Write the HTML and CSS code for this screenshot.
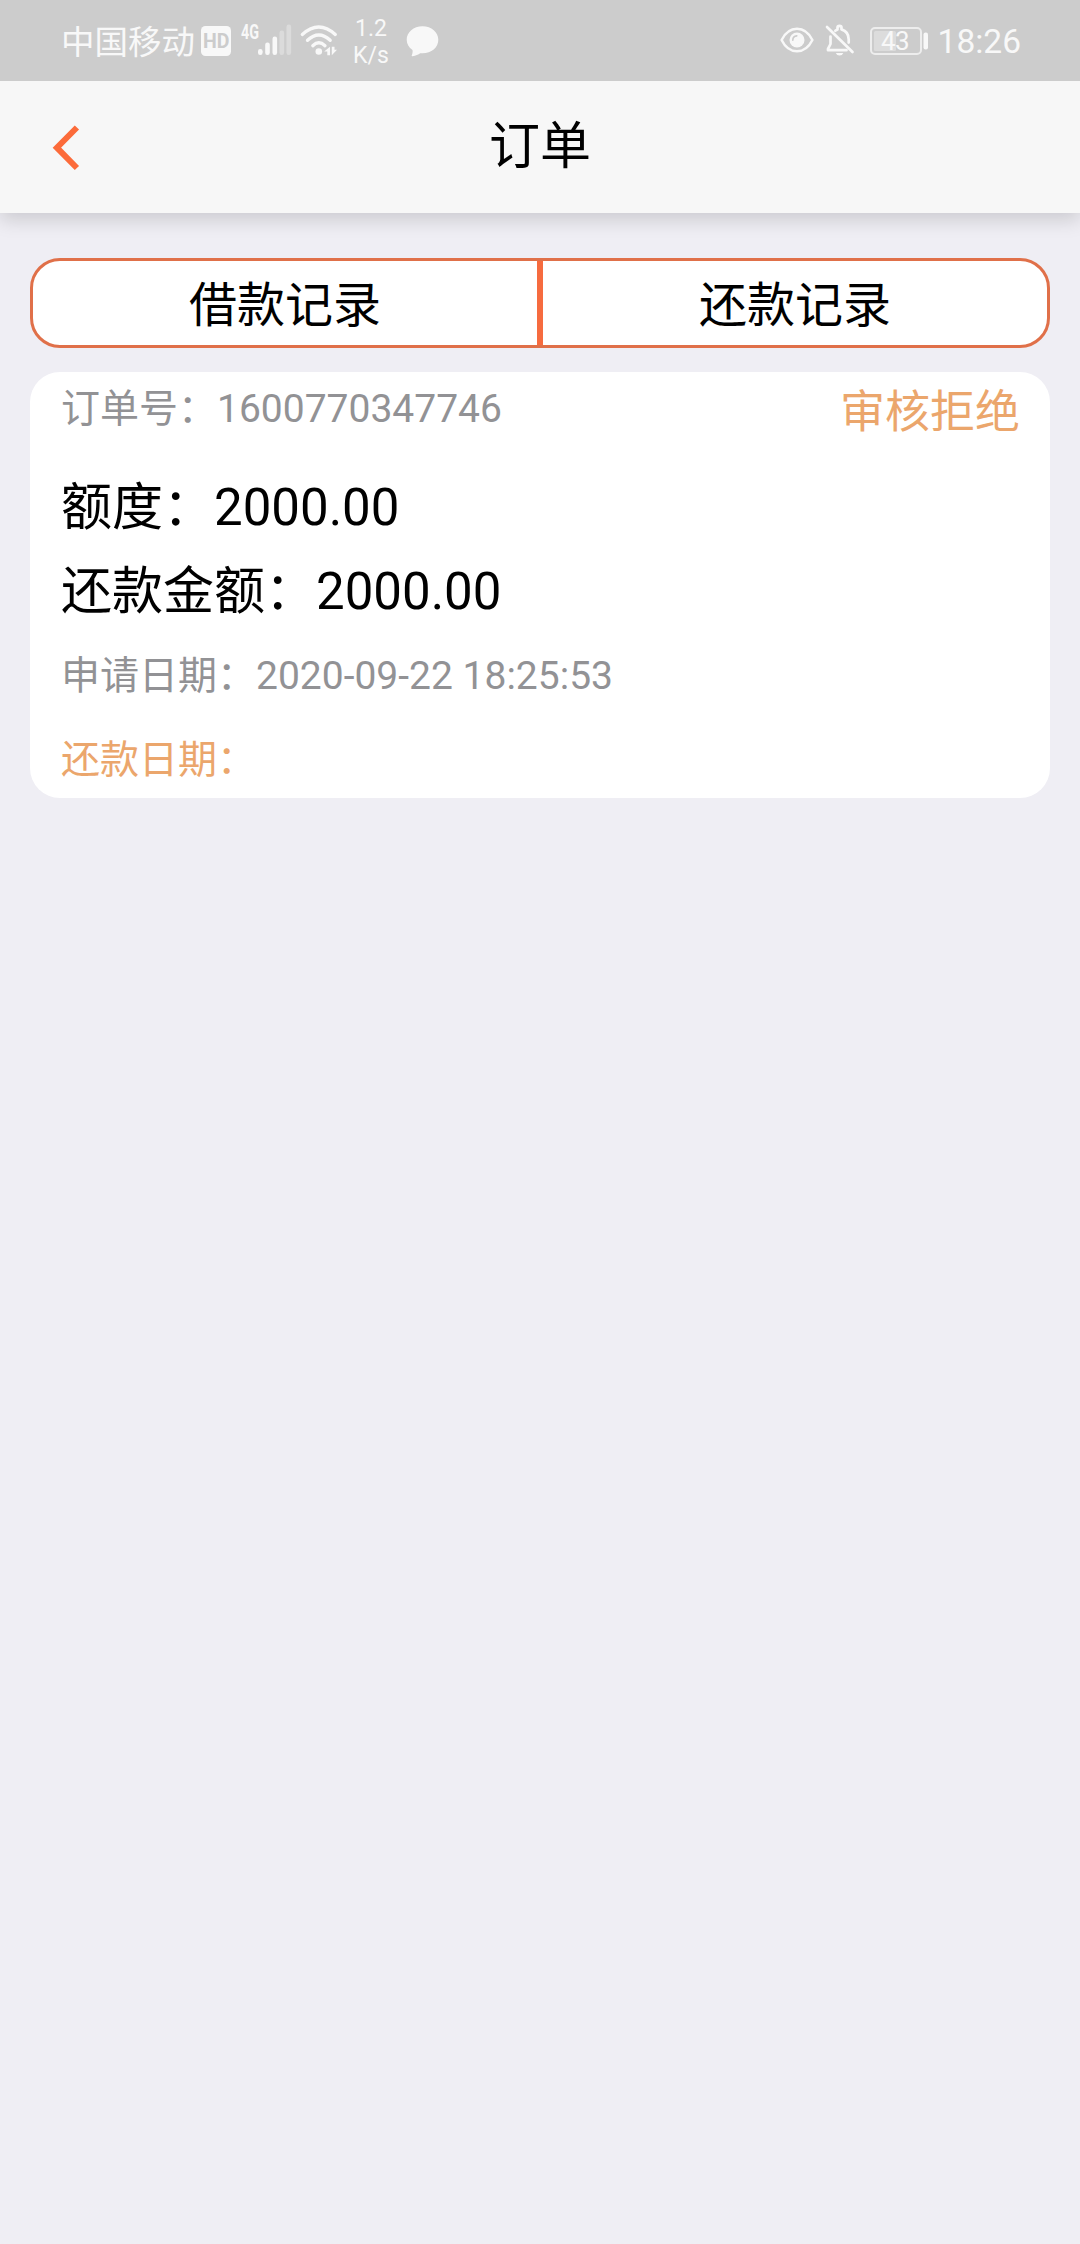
FILE: index.html
```html
<!DOCTYPE html>
<html lang="zh-CN">
<head>
<meta charset="utf-8">
<title>订单</title>
<link rel="stylesheet" href="styles.css">
</head>
<body>
<div class="statusbar">
  <div class="status-left">
    <span class="carrier">中国移动</span>
    <svg class="hd" width="30" height="30" viewBox="0 0 30 30"><rect width="30" height="30" rx="4.500" fill="#f8f8f8"/><text x="2" y="22" class="hd-text" textLength="26.500" lengthAdjust="spacingAndGlyphs">HD</text></svg>
    <svg class="signal" width="51" height="40" viewBox="0 -6 51 40">
      <text x="0" y="17" class="net-text" textLength="18" lengthAdjust="spacingAndGlyphs">4G</text>
      <g fill="#f8f8f8"><rect x="17" y="27" width="4.600" height="6" rx="2.200"/><rect x="24.200" y="20.500" width="4.600" height="12.500" rx="2.200"/><rect x="31.500" y="14.500" width="4.600" height="18.500" rx="2.200"/></g>
      <g fill="#dbdbdb"><rect x="38.500" y="8.500" width="4.600" height="24.500" rx="2.200"/><rect x="45.500" y="2.500" width="4.600" height="30.500" rx="2.200"/></g>
    </svg>
    <svg class="wifi" width="38" height="32" viewBox="0 0 38 32">
      <g fill="none" stroke="#f8f8f8" stroke-width="3.300" stroke-linecap="round"><path d="M2.300 9.500Q18.800-5.500 35.300 9.500"/><path d="M7.500 15.300Q18.800 4.700 30.200 15.300"/><path d="M12.800 20.700Q18.800 15 25 20.700"/></g>
      <circle cx="18.800" cy="26.500" r="3.300" fill="#f8f8f8"/>
      <path fill="#f8f8f8" d="M30 21.800v8.400h-2.700v-3.700h-3.100zM31.800 21.800v8.400l5.200-5.500h-2.500v-2.900z"/>
    </svg>
    <div class="speed"><span>1.2</span><span>K/s</span></div>
    <svg class="bubble" width="33" height="31" viewBox="0 0 33 31"><path fill="#f8f8f8" d="M16.500.3C7.500.3.700 6.200.700 13.800c0 4.200 2.200 7.800 5.800 10.300.4 2.200-.2 4-.8 5.400-.2.600.2 1 .9.800 3.300-.8 5.700-1.800 7.600-3.100 10.200 1 18.100-5 18.100-13.400C32.300 6.200 25.500.3 16.500.3z"/></svg>
  </div>
  <div class="status-right">
    <svg class="eye" width="34" height="26" viewBox="0 0 34 26"><path d="M1.600 13C9-2 25-2 32.400 13 25 28 9 28 1.600 13z" fill="none" stroke="#f8f8f8" stroke-width="2.500" stroke-linejoin="round"/><circle cx="17" cy="13" r="7.500" fill="#f8f8f8"/><path d="M12.800 13.200q0-4 4-4.300" fill="none" stroke="#ccc" stroke-width="1.600" stroke-linecap="round"/></svg>
    <svg class="bell" width="30" height="32" viewBox="0 0 30 32">
      <g fill="none" stroke="#f8f8f8" stroke-width="2.700" stroke-linecap="round" stroke-linejoin="round"><path d="M2 3 27.500 28"/><path d="M5.500 12.500v7.500L3 24.800v1.400h18.500"/><path d="M10.300 6.700q1-.8 2.200-1.300V3.700q0-1.800 2-1.800t2 1.800v1.700q7.200 2.300 7.200 10v3.200"/></g>
      <path d="M10.800 29h7.500q-1 2.500-3.750 2.500T10.800 29z" fill="#f8f8f8"/>
    </svg>
    <svg class="battery" width="59" height="28" viewBox="0 0 59 28"><rect x="1" y="1" width="50" height="26" rx="4" fill="none" stroke="#ededed" stroke-width="2"/><rect x="4" y="4" width="22" height="20" rx="1.500" fill="#dcdcdc"/><rect x="53.500" y="5.500" width="4.500" height="17" rx="2" fill="#f8f8f8"/><text x="11" y="22.500" class="battery-text" textLength="28.500">43</text></svg>
    <span class="clock">18:26</span>
  </div>
</div>
<header class="header">
  <svg class="back" width="28" height="46" viewBox="0 0 28 46"><path d="M24.900 2.500 4.900 22.700 24.900 43" fill="none" stroke="#fc6b3a" stroke-width="6"/></svg>
  <h1 class="title">订单</h1>
</header>
<main class="content">
  <nav class="tabs">
    <a class="tab">借款记录</a>
    <a class="tab">还款记录</a>
  </nav>
  <section class="card">
    <div class="row row-head"><span>订单号：1600770347746</span><span class="state">审核拒绝</span></div>
    <div class="row amount">额度：2000.00</div>
    <div class="row amount">还款金额：2000.00</div>
    <div class="row">申请日期：2020-09-22 18:25:53</div>
    <div class="row due">还款日期：</div>
  </section>
</main>
</body>
</html>
```
FILE: styles.css
```css
* { box-sizing: border-box; }
body {
  margin: 0;
  min-height: 2244px;
  background: #efeef4;
  color: #000;
  font-family: Roboto, "Noto Sans CJK SC", sans-serif;
}
.statusbar {
  display: flex;
  justify-content: space-between;
  height: 81px;
  padding: 0 59px 0 61px;
  background: #ccc;
  color: #f8f8f8;
}
.status-left, .status-right { display: flex; align-items: flex-start; }
.statusbar svg { display: block; flex: none; overflow: visible; }
.carrier { width: 134px; font-size: 33.5px; line-height: 81px; margin-top: 2px; white-space: nowrap; }
.hd { margin: 26px 0 0 6px; }
.hd-text { font: 700 20px Roboto, sans-serif; fill: #ccc; }
.signal { margin: 16px 0 0 10px; }
.net-text { font: 700 20px Roboto, sans-serif; fill: #f8f8f8; }
.wifi { margin: 25px 0 0 8px; }
.speed {
  display: flex;
  flex-direction: column;
  width: 36px;
  margin: 15px 0 0 15px;
  font-size: 23px;
  line-height: 27px;
  align-items: center;
}
.bubble { margin: 26px 0 0 17px; }
.eye { margin-top: 27px; }
.bell { margin: 24px 0 0 11px; }
.battery { margin: 27px 0 0 15px; }
.battery-text { font: 26px Roboto, sans-serif; fill: #f8f8f8; }
.clock { margin-left: 9px; font-size: 33.5px; line-height: 83px; }

.header {
  position: relative;
  display: grid;
  grid-template-columns: 1fr auto 1fr;
  align-items: center;
  height: 132px;
  padding: 0 52px;
  background: #f7f7f7;
  box-shadow: 0 7px 18px rgba(0, 0, 0, .15);
  clip-path: inset(0 0 -40px 0);
}
.back { display: block; margin-top: 2px; }
.title { margin: 0; font-size: 51px; line-height: 131px; font-weight: 400; align-self: start; }

.content { padding: 45px 30px 0; }
.tabs {
  display: flex;
  height: 90px;
  border: 3px solid #e07049;
  border-radius: 30px;
  background: #fff;
}
.tab { flex: 1; text-align: center; font-size: 48px; line-height: 89px; }
.tab + .tab { border-left: 3px solid #f66b3f; }
.tab:first-child { border-right: 3px solid #f66b3f; }

.card {
  height: 426px;
  margin-top: 24px;
  padding: 0 30px 0 31px;
  border-radius: 30px;
  background: #fff;
}
.row { height: 84px; font-size: 39px; line-height: 84px; color: #929295; white-space: nowrap; }
.row-head { display: flex; justify-content: space-between; height: 94px; line-height: 74px; }
.state { font-size: 45px; line-height: 82px; color: #eba66c; }
.amount { font-size: 51px; color: #000; }
.due { height: 80px; color: #eba66c; }
```
